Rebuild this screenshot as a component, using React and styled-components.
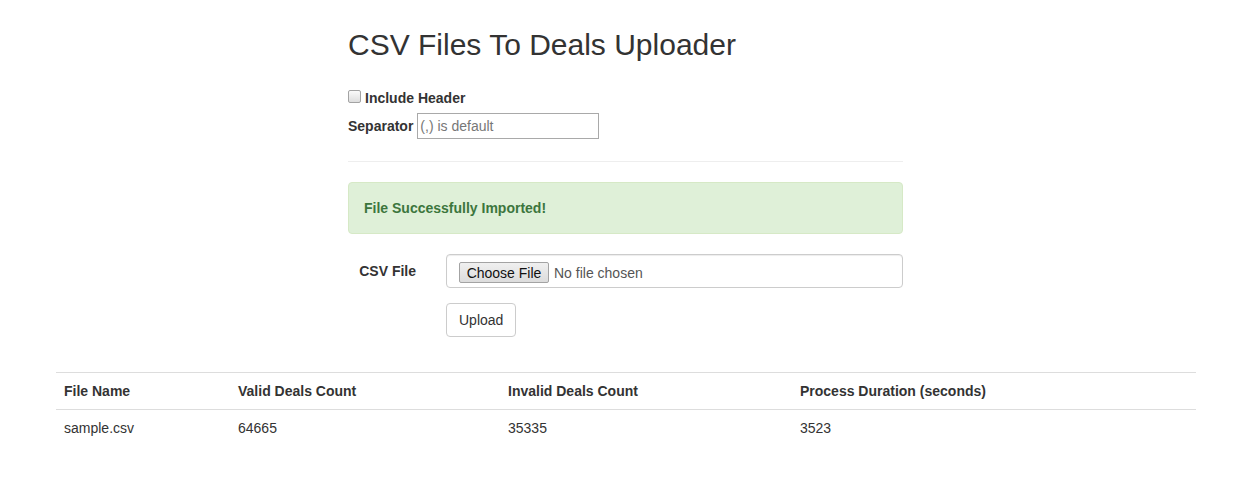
import styled, { createGlobalStyle } from 'styled-components';

const GlobalStyle = createGlobalStyle`
  * {
    box-sizing: border-box;
  }
  body {
    margin: 0;
    background: #fff;
    color: #333;
    font-family: 'Liberation Sans', Arial, sans-serif;
    font-size: 14px;
    line-height: 20px;
  }
`;

const Page = styled.div`
  width: 1140px;
  margin-left: 56px;
  padding-top: 28px;
`;

const FormColumn = styled.div`
  width: 555px;
  margin-left: 292px;
`;

const Title = styled.h2`
  margin: 0;
  font-size: 30px;
  line-height: 33px;
  font-weight: 500;
  color: #333;
`;

const OptionsForm = styled.div`
  margin-top: 27px;
  display: flex;
  flex-direction: column;
  gap: 5px;
`;

const CheckRow = styled.label`
  display: flex;
  align-items: center;
  font-weight: bold;
  height: 20px;
`;

const CheckBox = styled.input`
  appearance: none;
  width: 13px;
  height: 13px;
  margin: 0 4px 0 0;
  position: relative;
  top: -2px;
  border: 1px solid #a3a3a3;
  border-radius: 2px;
  background: linear-gradient(#fafafa, #dedede);
`;

const SeparatorRow = styled.div`
  display: flex;
  align-items: center;
  gap: 4px;
`;

const Label = styled.label`
  font-weight: bold;
`;

const TextInput = styled.input`
  width: 182px;
  height: 26px;
  border: 1px solid #a9a9a9;
  padding: 1px 2px;
  font-family: 'Liberation Sans', Arial, sans-serif;
  font-size: 14px;
  color: #333;
  &::placeholder {
    color: #777;
  }
`;

const Divider = styled.hr`
  margin: 22px 0 20px;
  border: 0;
  border-top: 1px solid #eee;
`;

const Alert = styled.div`
  padding: 15px;
  border: 1px solid #d6e9c6;
  border-radius: 4px;
  background: #dff0d8;
  color: #3c763d;
  font-weight: bold;
  margin-bottom: 20px;
`;

const FormRow = styled.div`
  display: grid;
  grid-template-columns: 98px 1fr;
  margin: 0 0 15px -15px;
`;

const ControlLabel = styled.label`
  font-weight: bold;
  text-align: right;
  padding: 7px 15px 0 0;
`;

const FieldCell = styled.div`
  padding-left: 15px;
`;

const FileInput = styled.input`
  display: block;
  width: 100%;
  height: 34px;
  padding: 6px 12px;
  border: 1px solid #ccc;
  border-radius: 4px;
  box-shadow: inset 0 1px 1px rgba(0, 0, 0, 0.075);
  font-family: 'Liberation Sans', Arial, sans-serif;
  font-size: 14px;
  color: #555;
  &::file-selector-button {
    width: 90px;
    height: 21px;
    font-family: 'Liberation Sans', Arial, sans-serif;
    font-size: 14px;
    color: #111;
    margin: 1px 5px 0 0;
    padding: 0;
    border: 1px solid #a3a3a3;
    border-radius: 2px;
    background: linear-gradient(#f0f0f0, #dcdcdc);
  }
`;

const Button = styled.button`
  padding: 6px 12px;
  border: 1px solid #ccc;
  border-radius: 4px;
  background: #fff;
  color: #333;
  font-family: 'Liberation Sans', Arial, sans-serif;
  font-size: 14px;
  line-height: 20px;
`;

const Table = styled.table`
  width: 100%;
  margin-top: 35px;
  border-collapse: collapse;
  border-top: 1px solid #ddd;
`;

const Th = styled.th`
  text-align: left;
  padding: 8px;
  border-bottom: 1px solid #ddd;
  width: ${(props) => props.w}px;
`;

const Td = styled.td`
  padding: 8px;
`;

const rows = [{ name: 'sample.csv', valid: 64665, invalid: 35335, duration: 3523 }];

const App = () => {
  return (
    <>
      <GlobalStyle />
      <Page>
        <FormColumn>
          <Title>CSV Files To Deals Uploader</Title>
          <OptionsForm>
            <CheckRow>
              <CheckBox type="checkbox" />
              Include Header
            </CheckRow>
            <SeparatorRow>
              <Label>Separator</Label>
              <TextInput type="text" placeholder="(,) is default" />
            </SeparatorRow>
          </OptionsForm>
          <Divider />
          <Alert>File Successfully Imported!</Alert>
          <FormRow>
            <ControlLabel>CSV File</ControlLabel>
            <FieldCell>
              <FileInput type="file" />
            </FieldCell>
          </FormRow>
          <FormRow>
            <div />
            <FieldCell>
              <Button>Upload</Button>
            </FieldCell>
          </FormRow>
        </FormColumn>
        <Table>
          <thead>
            <tr>
              <Th w={174}>File Name</Th>
              <Th w={270}>Valid Deals Count</Th>
              <Th w={292}>Invalid Deals Count</Th>
              <Th>Process Duration (seconds)</Th>
            </tr>
          </thead>
          <tbody>
            {rows.map((row) => (
              <tr key={row.name}>
                <Td>{row.name}</Td>
                <Td>{row.valid}</Td>
                <Td>{row.invalid}</Td>
                <Td>{row.duration}</Td>
              </tr>
            ))}
          </tbody>
        </Table>
      </Page>
    </>
  );
};

export default App;
